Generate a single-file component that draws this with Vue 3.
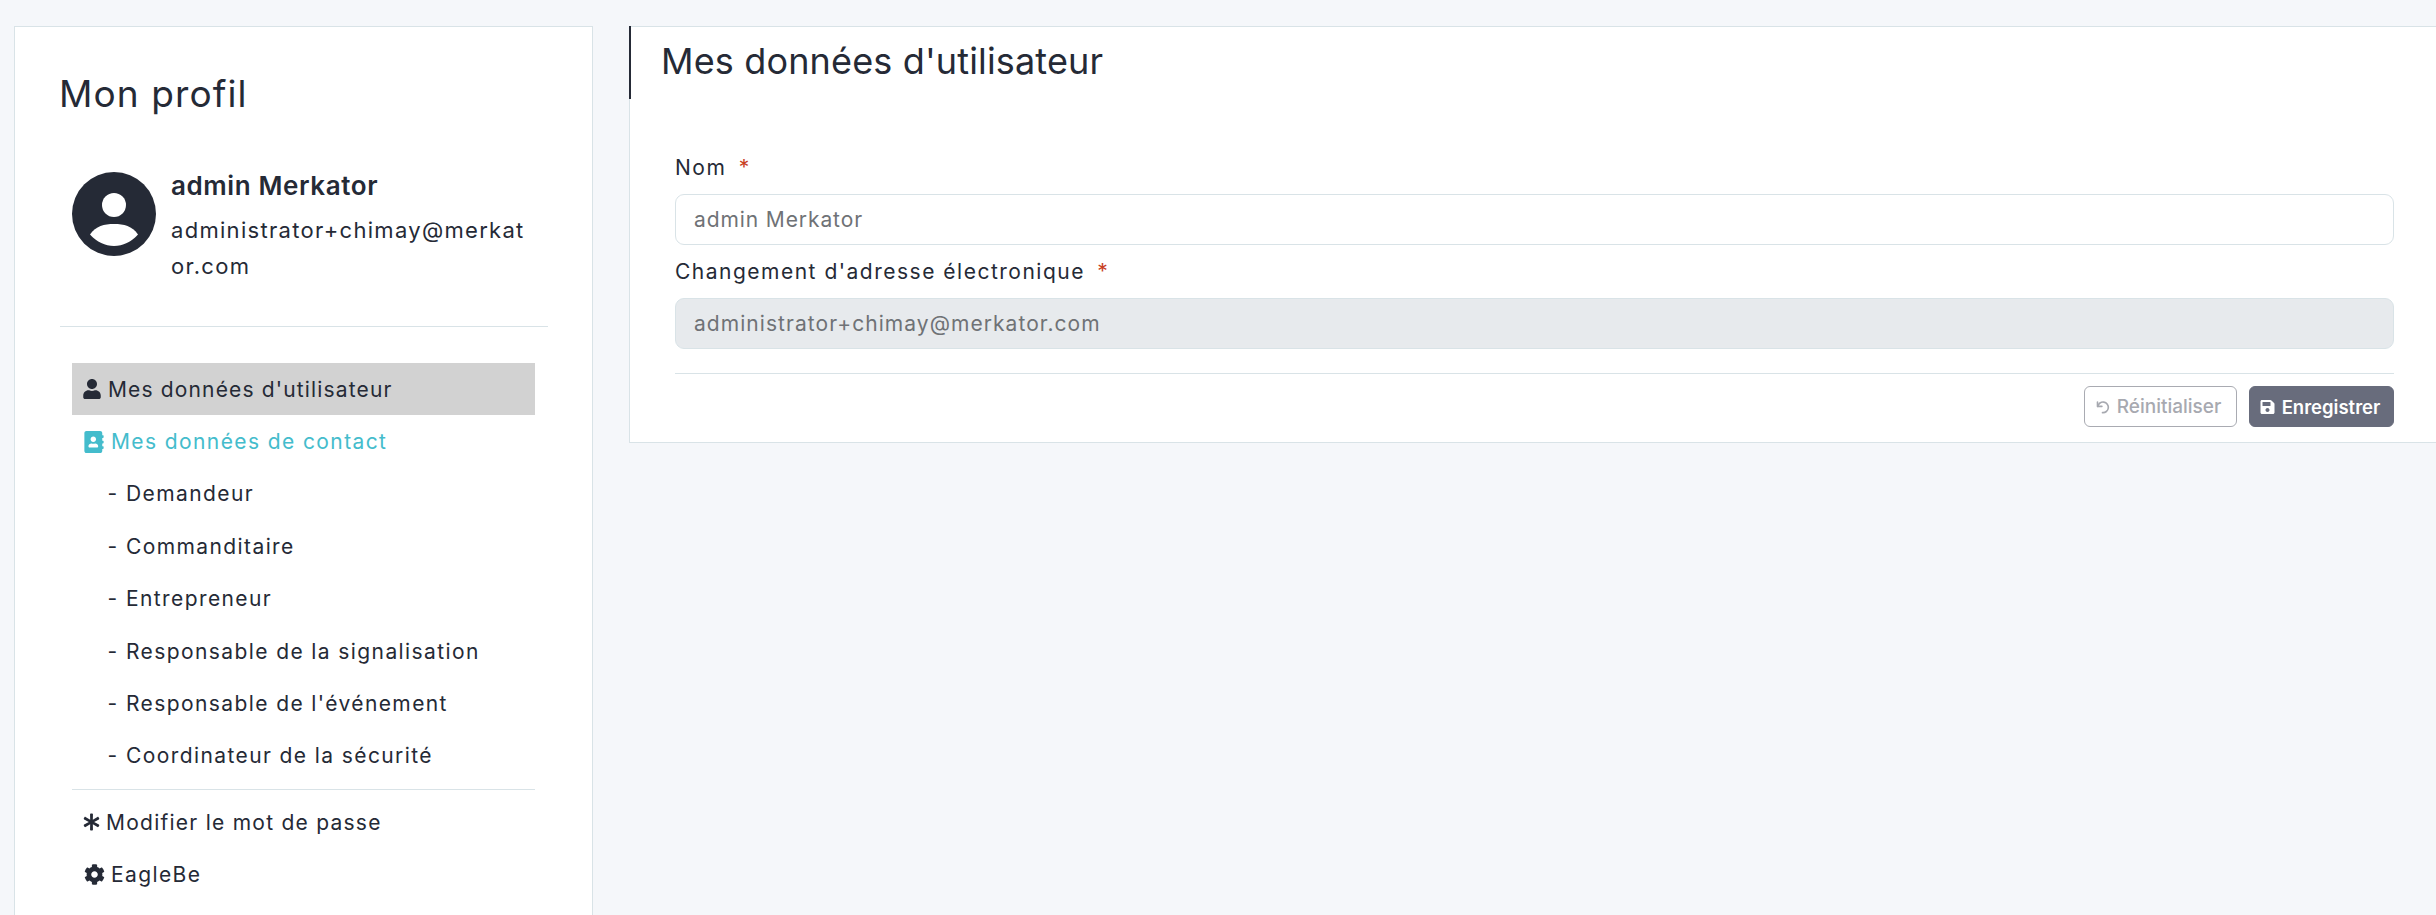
<script setup>
const subs = ['Demandeur', 'Commanditaire', 'Entrepreneur', 'Responsable de la signalisation', "Responsable de l'événement", 'Coordinateur de la sécurité']
</script>

<template>
  <div class="page">
    <aside class="side">
      <h2 class="side-title">Mon profil</h2>
      <div class="who">
        <svg class="avatar" viewBox="0 0 84 84">
          <circle cx="42" cy="42" r="42" fill="#252a36" />
          <circle cx="42" cy="33" r="12" fill="#fff" />
          <path d="M18 62.5 C24 54 32 52 42 52 C52 52 60 54 66 62.5 C59 70 51 74 42 74 C33 74 25 70 18 62.5 Z" fill="#fff" />
        </svg>
        <div class="who-text">
          <div class="who-name">admin Merkator</div>
          <div class="who-mail">administrator+chimay@merkat<br />or.com</div>
        </div>
      </div>
      <hr class="rule first" />
      <nav class="nav">
        <a class="row active">
          <svg class="ic user" viewBox="0 0 448 512"><path d="M224 256c70.7 0 128-57.3 128-128S294.7 0 224 0 96 57.3 96 128s57.3 128 128 128zm89.6 32h-16.7c-22.2 10.2-46.9 16-72.9 16s-50.6-5.8-72.9-16h-16.7C60.2 288 0 348.2 0 422.4V464c0 26.5 21.5 48 48 48h352c26.5 0 48-21.5 48-48v-41.6c0-74.2-60.2-134.4-134.4-134.4z" /></svg>
          <span>Mes données d'utilisateur</span>
        </a>
        <a class="row teal">
          <svg class="ic book" viewBox="0 0 448 512"><path d="M436 160c6.6 0 12-5.4 12-12v-40c0-6.6-5.4-12-12-12h-20V48c0-26.5-21.5-48-48-48H48C21.5 0 0 21.5 0 48v416c0 26.5 21.5 48 48 48h320c26.5 0 48-21.5 48-48v-48h20c6.6 0 12-5.4 12-12v-40c0-6.6-5.4-12-12-12h-20v-64h20c6.6 0 12-5.4 12-12v-40c0-6.6-5.4-12-12-12h-20v-64h20zm-228-32c35.3 0 64 28.7 64 64s-28.7 64-64 64-64-28.7-64-64 28.7-64 64-64zm112 236.8c0 10.6-10 19.2-22.4 19.2H118.4C106 384 96 375.4 96 364.8v-19.2c0-31.8 30.1-57.6 67.2-57.6h5c12.3 5.1 25.7 8 39.8 8s27.6-2.9 39.8-8h5c37.1 0 67.2 25.8 67.2 57.6v19.2z" /></svg>
          <span>Mes données de contact</span>
        </a>
        <a v-for="s in subs" :key="s" class="row sub"><span class="dash">-</span><span>{{ s }}</span></a>
        <hr class="rule second" />
        <a class="row">
          <svg class="ic star" viewBox="0 0 512 512"><path d="M478.21 334.093L336 256l142.21-78.093c11.795-6.477 15.961-21.384 9.232-33.037l-19.48-33.741c-6.728-11.653-21.72-15.499-33.227-8.523L296 186.718l3.475-162.204C299.763 11.061 288.937 0 275.48 0h-38.96c-13.456 0-24.283 11.061-23.994 24.514L216 186.718 77.265 102.607c-11.506-6.976-26.499-3.13-33.227 8.523l-19.48 33.741c-6.728 11.653-2.562 26.56 9.233 33.037L176 256 33.79 334.093c-11.795 6.477-15.961 21.384-9.232 33.037l19.48 33.741c6.728 11.653 21.721 15.499 33.227 8.523L216 325.282l-3.475 162.204C212.237 500.939 223.064 512 236.52 512h38.961c13.456 0 24.283-11.061 23.995-24.514L296 325.282l138.735 84.111c11.506 6.976 26.499 3.13 33.227-8.523l19.48-33.741c6.728-11.653 2.563-26.559-9.232-33.036z" /></svg>
          <span class="tight">Modifier le mot de passe</span>
        </a>
        <a class="row">
          <svg class="ic cog" viewBox="0 0 512 512"><path d="M487.4 315.7l-42.6-24.6c4.3-23.2 4.3-47 0-70.2l42.6-24.6c4.9-2.8 7.1-8.6 5.5-14-11.1-35.6-30-67.8-54.7-94.6-3.8-4.1-10-5.1-14.8-2.3L380.8 110c-17.9-15.4-38.5-27.3-60.8-35.1V25.8c0-5.6-3.9-10.5-9.4-11.7-36.7-8.2-74.3-7.8-109.2 0-5.5 1.2-9.4 6.1-9.4 11.7V75c-22.2 7.9-42.8 19.8-60.8 35.1L88.7 85.5c-4.9-2.8-11-1.9-14.8 2.3-24.7 26.7-43.6 58.9-54.7 94.6-1.7 5.4.6 11.2 5.5 14L67.3 221c-4.3 23.2-4.3 47 0 70.2l-42.6 24.6c-4.9 2.8-7.1 8.6-5.5 14 11.1 35.6 30 67.8 54.7 94.6 3.8 4.1 10 5.1 14.8 2.3l42.6-24.6c17.9 15.4 38.5 27.3 60.8 35.1v49.2c0 5.6 3.9 10.5 9.4 11.7 36.7 8.2 74.3 7.8 109.2 0 5.5-1.2 9.4-6.1 9.4-11.7v-49.2c22.2-7.9 42.8-19.8 60.8-35.1l42.6 24.6c4.9 2.8 11 1.9 14.8-2.3 24.7-26.7 43.6-58.9 54.7-94.6 1.5-5.5-.7-11.3-5.6-14.1zM256 336c-44.1 0-80-35.9-80-80s35.9-80 80-80 80 35.9 80 80-35.9 80-80 80z" /></svg>
          <span>EagleBe</span>
        </a>
      </nav>
    </aside>

    <main class="main">
      <header class="head"><h1>Mes données d'utilisateur</h1></header>
      <form class="form">
        <label class="lab">Nom <b>*</b></label>
        <input class="inp" type="text" value="admin Merkator" />
        <label class="lab">Changement d'adresse électronique <b>*</b></label>
        <input class="inp off" type="text" value="administrator+chimay@merkator.com" disabled />
        <hr class="rule third" />
        <div class="acts">
          <button type="button" class="btn ghost">
            <svg class="bi" viewBox="0 0 24 24" fill="none" stroke="currentColor" stroke-width="2.6" stroke-linecap="round" stroke-linejoin="round"><path d="M4 4v7h7" /><path d="M4.5 11A8.5 8.5 0 1 1 12 21" /></svg>
            Réinitialiser
          </button>
          <button type="button" class="btn solid">
            <svg class="bi" viewBox="0 0 448 512" fill="currentColor"><path d="M433.941 129.941l-83.882-83.882A48 48 0 0 0 316.118 32H48C21.49 32 0 53.49 0 80v352c0 26.51 21.49 48 48 48h352c26.51 0 48-21.49 48-48V163.882a48 48 0 0 0-14.059-33.941zM224 416c-35.346 0-64-28.654-64-64 0-35.346 28.654-64 64-64s64 28.654 64 64c0 35.346-28.654 64-64 64zm96-304.52V212c0 6.627-5.373 12-12 12H76c-6.627 0-12-5.373-12-12V108c0-6.627 5.373-12 12-12h228.52c3.183 0 6.235 1.264 8.485 3.515l3.48 3.48A11.996 11.996 0 0 1 320 111.48z" /></svg>
            Enregistrer
          </button>
        </div>
      </form>
    </main>
  </div>
</template>

<style>
html, body { margin: 0; background: #f5f7fa; }
</style>

<style scoped>
.page {
  display: flex;
  align-items: flex-start;
  gap: 36px;
  height: 915px;
  width: 2436px;
  overflow: hidden;
  box-sizing: border-box;
  padding: 26px 0 0 14px;
  background: #f5f7fa;
  color: #252a36;
  font-family: Inter, "Noto Sans", sans-serif;
}
.side {
  flex: none;
  width: 579px;
  min-height: 900px;
  box-sizing: border-box;
  background: #fff;
  border: 1px solid #d9e3e7;
  padding: 47px 44px 0 45px;
}
.side-title {
  margin: 0 0 0 -1px;
  font-size: 37px;
  line-height: 40px;
  font-weight: 400;
  letter-spacing: 1.1px;
}
.who { display: flex; align-items: flex-start; gap: 15px; margin: 54px 0 0 12px; }
.avatar { width: 84px; height: 84px; flex: none; margin-top: 4px; }
.who-name { font-size: 26px; line-height: 36px; font-weight: 600; margin-bottom: 8px; letter-spacing: 0.6px; }
.who-mail { font-size: 22px; line-height: 36px; letter-spacing: 1.3px; white-space: nowrap; }
.rule { border: 0; height: 1px; background: #d9e3e7; margin: 0; }
.first { margin-top: 42px; }
.nav { display: flex; flex-direction: column; margin: 36px 13px 0 12px; }
.row {
  display: flex;
  align-items: center;
  height: 52.4px;
  font-size: 21px;
  letter-spacing: 1.4px;
  padding-left: 11px;
  box-sizing: border-box;
}
.active { background: #d2d2d2; letter-spacing: 1.15px; }
.teal { color: #44bccc; }
.sub { padding-left: 35.5px; }
.dash { width: 18.5px; flex: none; }
.second { margin: 7px 0 6px; }
.tight { letter-spacing: 1.25px; }
.ic { flex: none; fill: currentColor; }
.user { width: 18px; height: 20px; margin-right: 7px; }
.book { width: 20px; height: 22px; margin: 0 7px 0 1px; }
.star { width: 17px; height: 18px; margin-right: 6px; }
.cog { width: 21px; height: 21px; margin: 0 6px 0 1px; }
.main {
  flex: none;
  width: 1811px;
  box-sizing: border-box;
  background: #fff;
  border: 1px solid #d9e3e7;
}
.head {
  height: 73px;
  margin: -1px 0 0 -1px;
  border-left: 2px solid #252a36;
  display: flex;
  align-items: center;
  padding: 0 0 4px 30px;
  box-sizing: border-box;
}
.head h1 { margin: 0; font-size: 36px; font-weight: 400; letter-spacing: 0.15px; line-height: 44px; }
.form { display: flex; flex-direction: column; padding: 53px 45px 15px; }
.lab { font-size: 21px; line-height: 32px; letter-spacing: 1.5px; margin-bottom: 10px; }
.lab b { color: #c8401f; font-weight: 400; margin-left: 5px; }
.inp {
  height: 51px;
  box-sizing: border-box;
  border: 1px solid #d9e3e7;
  border-radius: 9px;
  background: #fff;
  padding: 0 18px;
  margin-bottom: 11px;
  font: inherit;
  font-size: 21px;
  letter-spacing: 0.9px;
  color: #6f7276;
  outline: none;
}
.off { background: #e7eaed; letter-spacing: 1.05px; -webkit-text-fill-color: #6f7276; opacity: 1; }
.third { margin-top: 13px; }
.acts { display: flex; justify-content: flex-end; gap: 12px; margin-top: 12px; }
.btn {
  height: 41px;
  box-sizing: border-box;
  display: flex;
  align-items: center;
  justify-content: center;
  gap: 7px;
  border-radius: 6px;
  font: inherit;
  font-size: 19px;
  padding: 0;
}
.bi { width: 15px; height: 16px; flex: none; }
.ghost { width: 153px; background: #fff; border: 1px solid #a9abb2; color: #a7a9b0; font-weight: 500; padding-right: 5px; }
.solid { width: 145px; background: #686c7c; border: 1px solid #686c7c; color: #fff; font-weight: 600; font-size: 18.5px; padding-right: 3px; }
</style>
